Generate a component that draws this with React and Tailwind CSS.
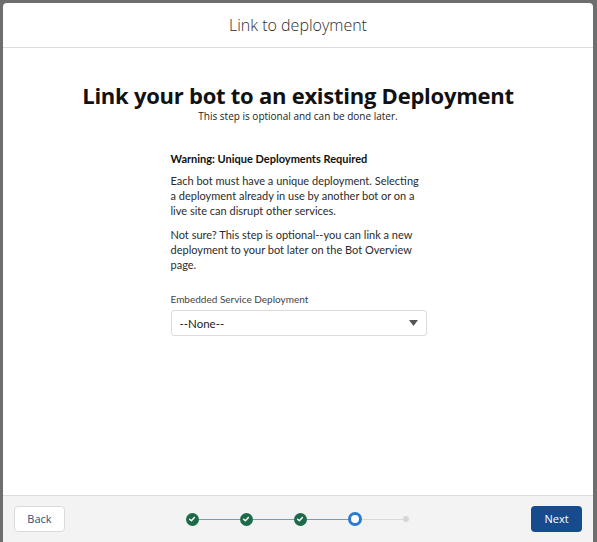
import React from "react";

const Check = () => (
  <span className="w-[13px] h-[13px] rounded-full bg-[#1c6a4a] flex items-center justify-center">
    <svg width="8" height="8" viewBox="0 0 10 10">
      <path d="M2 5.2 L4.2 7.3 L8 3" fill="none" stroke="white" strokeWidth="1.8" strokeLinecap="round" strokeLinejoin="round" />
    </svg>
  </span>
);

const Line = ({ done }) => (
  <span className={done ? "w-[41px] h-px bg-[#7a9bb8]" : "w-[41px] h-px bg-[#d8d8d8]"} />
);

export default function App() {
  return (
    <div className="h-[542px] bg-[#6e6e6e] pl-[3px] pr-[4px] pt-[3px] overflow-hidden" style={{ fontFamily: '"Open Sans", sans-serif' }}>
      <div className="bg-white rounded-t-[4px] h-full flex flex-col">
        <div className="h-[45px] border-b border-[#dddbda] flex items-center justify-center">
          <h1 className="text-[16px] font-light text-[#2b2b2b]">Link to deployment</h1>
        </div>
        <div className="flex-1 flex flex-col items-center pt-[33px]">
          <h2 className="text-[22px] font-bold text-[#111] leading-[28px] tracking-[-0.25px]">Link your bot to an existing Deployment</h2>
          <p className="text-[10px] text-[#222] leading-[14px]">This step is optional and can be done later.</p>
          <div className="w-[256px] mt-[28px] text-[11px] text-[#2b2b2b] leading-[15px] ml-[1px]" style={{ fontFamily: 'Lato, sans-serif' }}>
            <p className="font-bold text-[#111]">Warning: Unique Deployments Required</p>
            <p className="mt-[7px]">Each bot must have a unique deployment. Selecting a deployment already in use by another bot or on a live site can disrupt other services.</p>
            <p className="mt-[9px]">Not sure? This step is optional--you can link a new deployment to your bot later on the Bot Overview page.</p>
            <p className="mt-[20px] text-[10px] text-[#444]">Embedded Service Deployment</p>
            <div className="mt-[3px] h-[26px] border border-[#dddbda] rounded-[3px] flex items-center justify-between px-[8px]">
              <span className="text-[11.5px] text-[#222]">--None--</span>
              <svg width="9" height="6" viewBox="0 0 9 6"><path d="M0 0 H9 L4.5 6 Z" fill="#555" /></svg>
            </div>
          </div>
        </div>
        <div className="h-[47px] bg-[#f3f3f3] border-t border-[#dddbda] flex items-center justify-between px-[11px]">
          <button className="w-[51px] h-[26px] bg-white border border-[#dddbda] rounded-[4px] text-[11px] text-[#2a4f7a]">Back</button>
          <div className="flex items-center mr-[2px]">
            <Check />
            <Line done />
            <Check />
            <Line done />
            <Check />
            <Line done />
            <span className="w-[14px] h-[14px] rounded-full border-[3px] border-[#2a7ad4] bg-white" />
            <Line />
            <span className="w-[6px] h-[6px] rounded-full bg-[#d6d6d6]" />
          </div>
          <button className="w-[51px] h-[26px] bg-[#164b8e] rounded-[4px] text-[11px] text-white">Next</button>
        </div>
      </div>
    </div>
  );
}
